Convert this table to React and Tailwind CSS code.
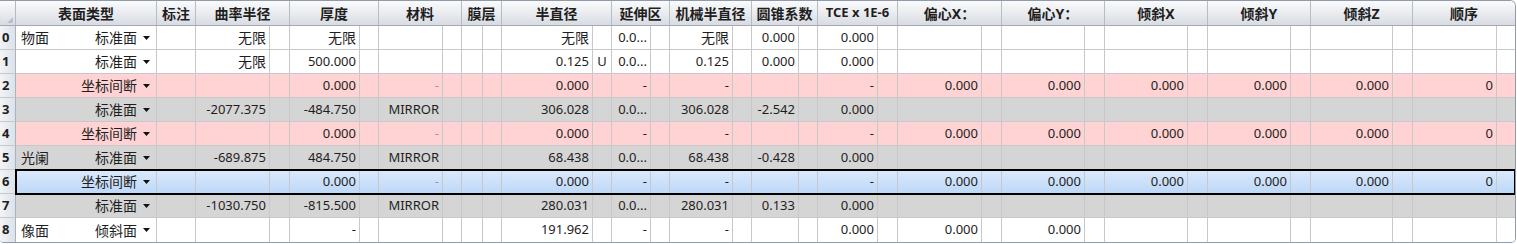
import React from "react";

const FONT = "[font-family:'Noto_Sans','Noto_Sans_CJK_SC',sans-serif]";

// header labels and widths (main + solve column)
const HEAD = [
  { label: "表面类型", w: "w-[141px]" },
  { label: "标注", w: "w-[39px]" },
  { label: "曲率半径", w: "w-[94px]" },
  { label: "厚度", w: "w-[89px]" },
  { label: "材料", w: "w-[83px]" },
  { label: "膜层", w: "w-[40px]" },
  { label: "半直径", w: "w-[110px]" },
  { label: "延伸区", w: "w-[58px]" },
  { label: "机械半直径", w: "w-[82px]" },
  { label: "圆锥系数", w: "w-[66px]" },
  { label: "TCE x 1E-6", w: "w-[80px]" },
  { label: "偏心X：", w: "w-[104px]" },
  { label: "偏心Y：", w: "w-[103px]" },
  { label: "倾斜X", w: "w-[103px]" },
  { label: "倾斜Y", w: "w-[103px]" },
  { label: "倾斜Z", w: "w-[102px]" },
  { label: "顺序", w: "w-[102px]", last: true },
];

// data columns after 标注: main cell + solve cell
const COLS = [
  { m: "w-[74px]", s: "w-[20px]" },
  { m: "w-[70px]", s: "w-[19px]" },
  { m: "w-[64px]", s: "w-[19px]" },
  { m: "w-[21px]", s: "w-[19px]" },
  { m: "w-[91px]", s: "w-[19px]" },
  { m: "w-[39px]", s: "w-[19px]" },
  { m: "w-[63px]", s: "w-[19px]" },
  { m: "w-[47px]", s: "w-[19px]" },
  { m: "w-[60px]", s: "w-[20px]" },
  { m: "w-[84px]", s: "w-[20px]" },
  { m: "w-[83px]", s: "w-[20px]" },
  { m: "w-[83px]", s: "w-[20px]" },
  { m: "w-[83px]", s: "w-[20px]" },
  { m: "w-[82px]", s: "w-[20px]" },
  { m: "w-[84px]", s: "w-[18px]", last: true },
];

const BREAK = ["", "0.000", "G-", "", "0.000", "-", "-", "", "-", "0.000", "0.000", "0.000", "0.000", "0.000", "0"];
const E6 = ["", "", "", "", "", ""];

const ROWS = [
  { bg: "white", comment: "物面", type: "标准面", v: ["无限", "无限", "", "", "无限", "0.0...", "无限", "0.000", "0.000", ...E6] },
  { bg: "white", comment: "", type: "标准面", v: ["无限", "500.000", "", "", "0.125", "0.0...", "0.125", "0.000", "0.000", ...E6], s: { 4: "U" } },
  { bg: "pink", comment: "", type: "坐标间断", v: BREAK },
  { bg: "gray", comment: "", type: "标准面", v: ["-2077.375", "-484.750", "MIRROR", "", "306.028", "0.0...", "306.028", "-2.542", "0.000", ...E6] },
  { bg: "pink", comment: "", type: "坐标间断", v: BREAK },
  { bg: "gray", comment: "光阑", type: "标准面", v: ["-689.875", "484.750", "MIRROR", "", "68.438", "0.0...", "68.438", "-0.428", "0.000", ...E6] },
  { bg: "blue", comment: "", type: "坐标间断", v: BREAK, selected: true },
  { bg: "gray", comment: "", type: "标准面", v: ["-1030.750", "-815.500", "MIRROR", "", "280.031", "0.0...", "280.031", "0.133", "0.000", ...E6] },
  { bg: "white", comment: "像面", type: "倾斜面", v: ["", "-", "", "", "191.962", "-", "-", "", "0.000", "0.000", "0.000", "", "", "", ""] },
];

const BG = {
  white: "bg-white",
  pink: "bg-[#ffd3d3]",
  gray: "bg-[#d5d5d5]",
  blue: "bg-linear-to-b from-[#dceafc] to-[#bcd7f8]",
};

const isCJK = (t) => /[\u4e00-\u9fff]/.test(t);

function Arrow() {
  return (
    <svg width="7" height="4" viewBox="0 0 7 4" className="ml-[6px] shrink-0">
      <path d="M0 0H7L3.5 4Z" fill="#111" />
    </svg>
  );
}

function Cell({ w, text, last, rowLast, center }) {
  const gray = text === "G-";
  const t = gray ? "-" : text;
  return (
    <div
      className={`${w} h-full flex items-center ${center ? "justify-center" : "justify-end pr-[3px]"} overflow-hidden whitespace-nowrap ${last ? "" : "border-r"} ${rowLast ? "" : "border-b"} border-[#c8c8c8] ${isCJK(t) ? "text-[14px]" : "text-[13px]"} ${gray ? "text-[#9a9a9a]" : "text-[#1e1e1e]"}`}
    >
      {t}
    </div>
  );
}

function Row({ row, idx, rowLast }) {
  return (
    <div className="flex h-[24px]">
      <div
        className={`w-[16px] h-full shrink-0 flex items-center pl-[2px] text-[13px] font-bold text-[#1e1e1e] border-r border-[#a9b2be] ${rowLast ? "" : "border-b"} border-b-[#c3c9d1] bg-linear-to-r from-[#f2f4f7] to-[#dde2e8]`}
      >
        {idx}
      </div>
      <div
        className={`flex h-full ${BG[row.bg]} ${row.selected ? "relative z-10 outline-2 outline-black -outline-offset-1" : ""}`}
      >
        <div
          className={`w-[141px] h-full flex items-center justify-between pl-[5px] pr-[6px] border-r ${rowLast ? "" : "border-b"} border-[#c8c8c8] text-[14px] text-[#1e1e1e] whitespace-nowrap`}
        >
          <span>{row.comment}</span>
          <span className="flex items-center">
            {row.type}
            <Arrow />
          </span>
        </div>
        <Cell w="w-[39px]" text="" rowLast={rowLast} />
        {COLS.map((c, i) => (
          <React.Fragment key={i}>
            <Cell w={c.m} text={row.v[i]} rowLast={rowLast} />
            <Cell w={c.s} text={(row.s && row.s[i]) || ""} last={c.last} rowLast={rowLast} center />
          </React.Fragment>
        ))}
      </div>
    </div>
  );
}

export default function App() {
  return (
    <div className={`w-[1517px] h-[244px] bg-white ${FONT}`}>
      <div className="w-[1516px] border-t border-r border-b border-[#8d9bad] rounded-tr-[6px] rounded-br-[5px] rounded-bl-[4px] overflow-hidden">
        {/* header */}
        <div className="flex h-[25px] border-b border-[#a3abb6] bg-linear-to-b from-[#fbfbfc] to-[#d8dce2]">
          <div className="w-[16px] h-full shrink-0 border-r border-[#b3bac4] flex items-end justify-end pr-[2px] pb-[2px]">
            <svg width="6" height="6" viewBox="0 0 6 6">
              <path d="M6 0V6H0Z" fill="#b9c0ca" />
            </svg>
          </div>
          {HEAD.map((h) => (
            <div
              key={h.label}
              className={`${h.w} h-full flex items-center justify-center font-bold text-[#1e1e1e] whitespace-nowrap ${h.last ? "" : "border-r"} border-[#b6bdc6] ${isCJK(h.label) ? "text-[14px]" : "text-[13px]"}`}
            >
              {h.label}
            </div>
          ))}
        </div>
        {/* rows */}
        {ROWS.map((r, i) => (
          <Row key={i} row={r} idx={i} rowLast={i === ROWS.length - 1} />
        ))}
      </div>
    </div>
  );
}
